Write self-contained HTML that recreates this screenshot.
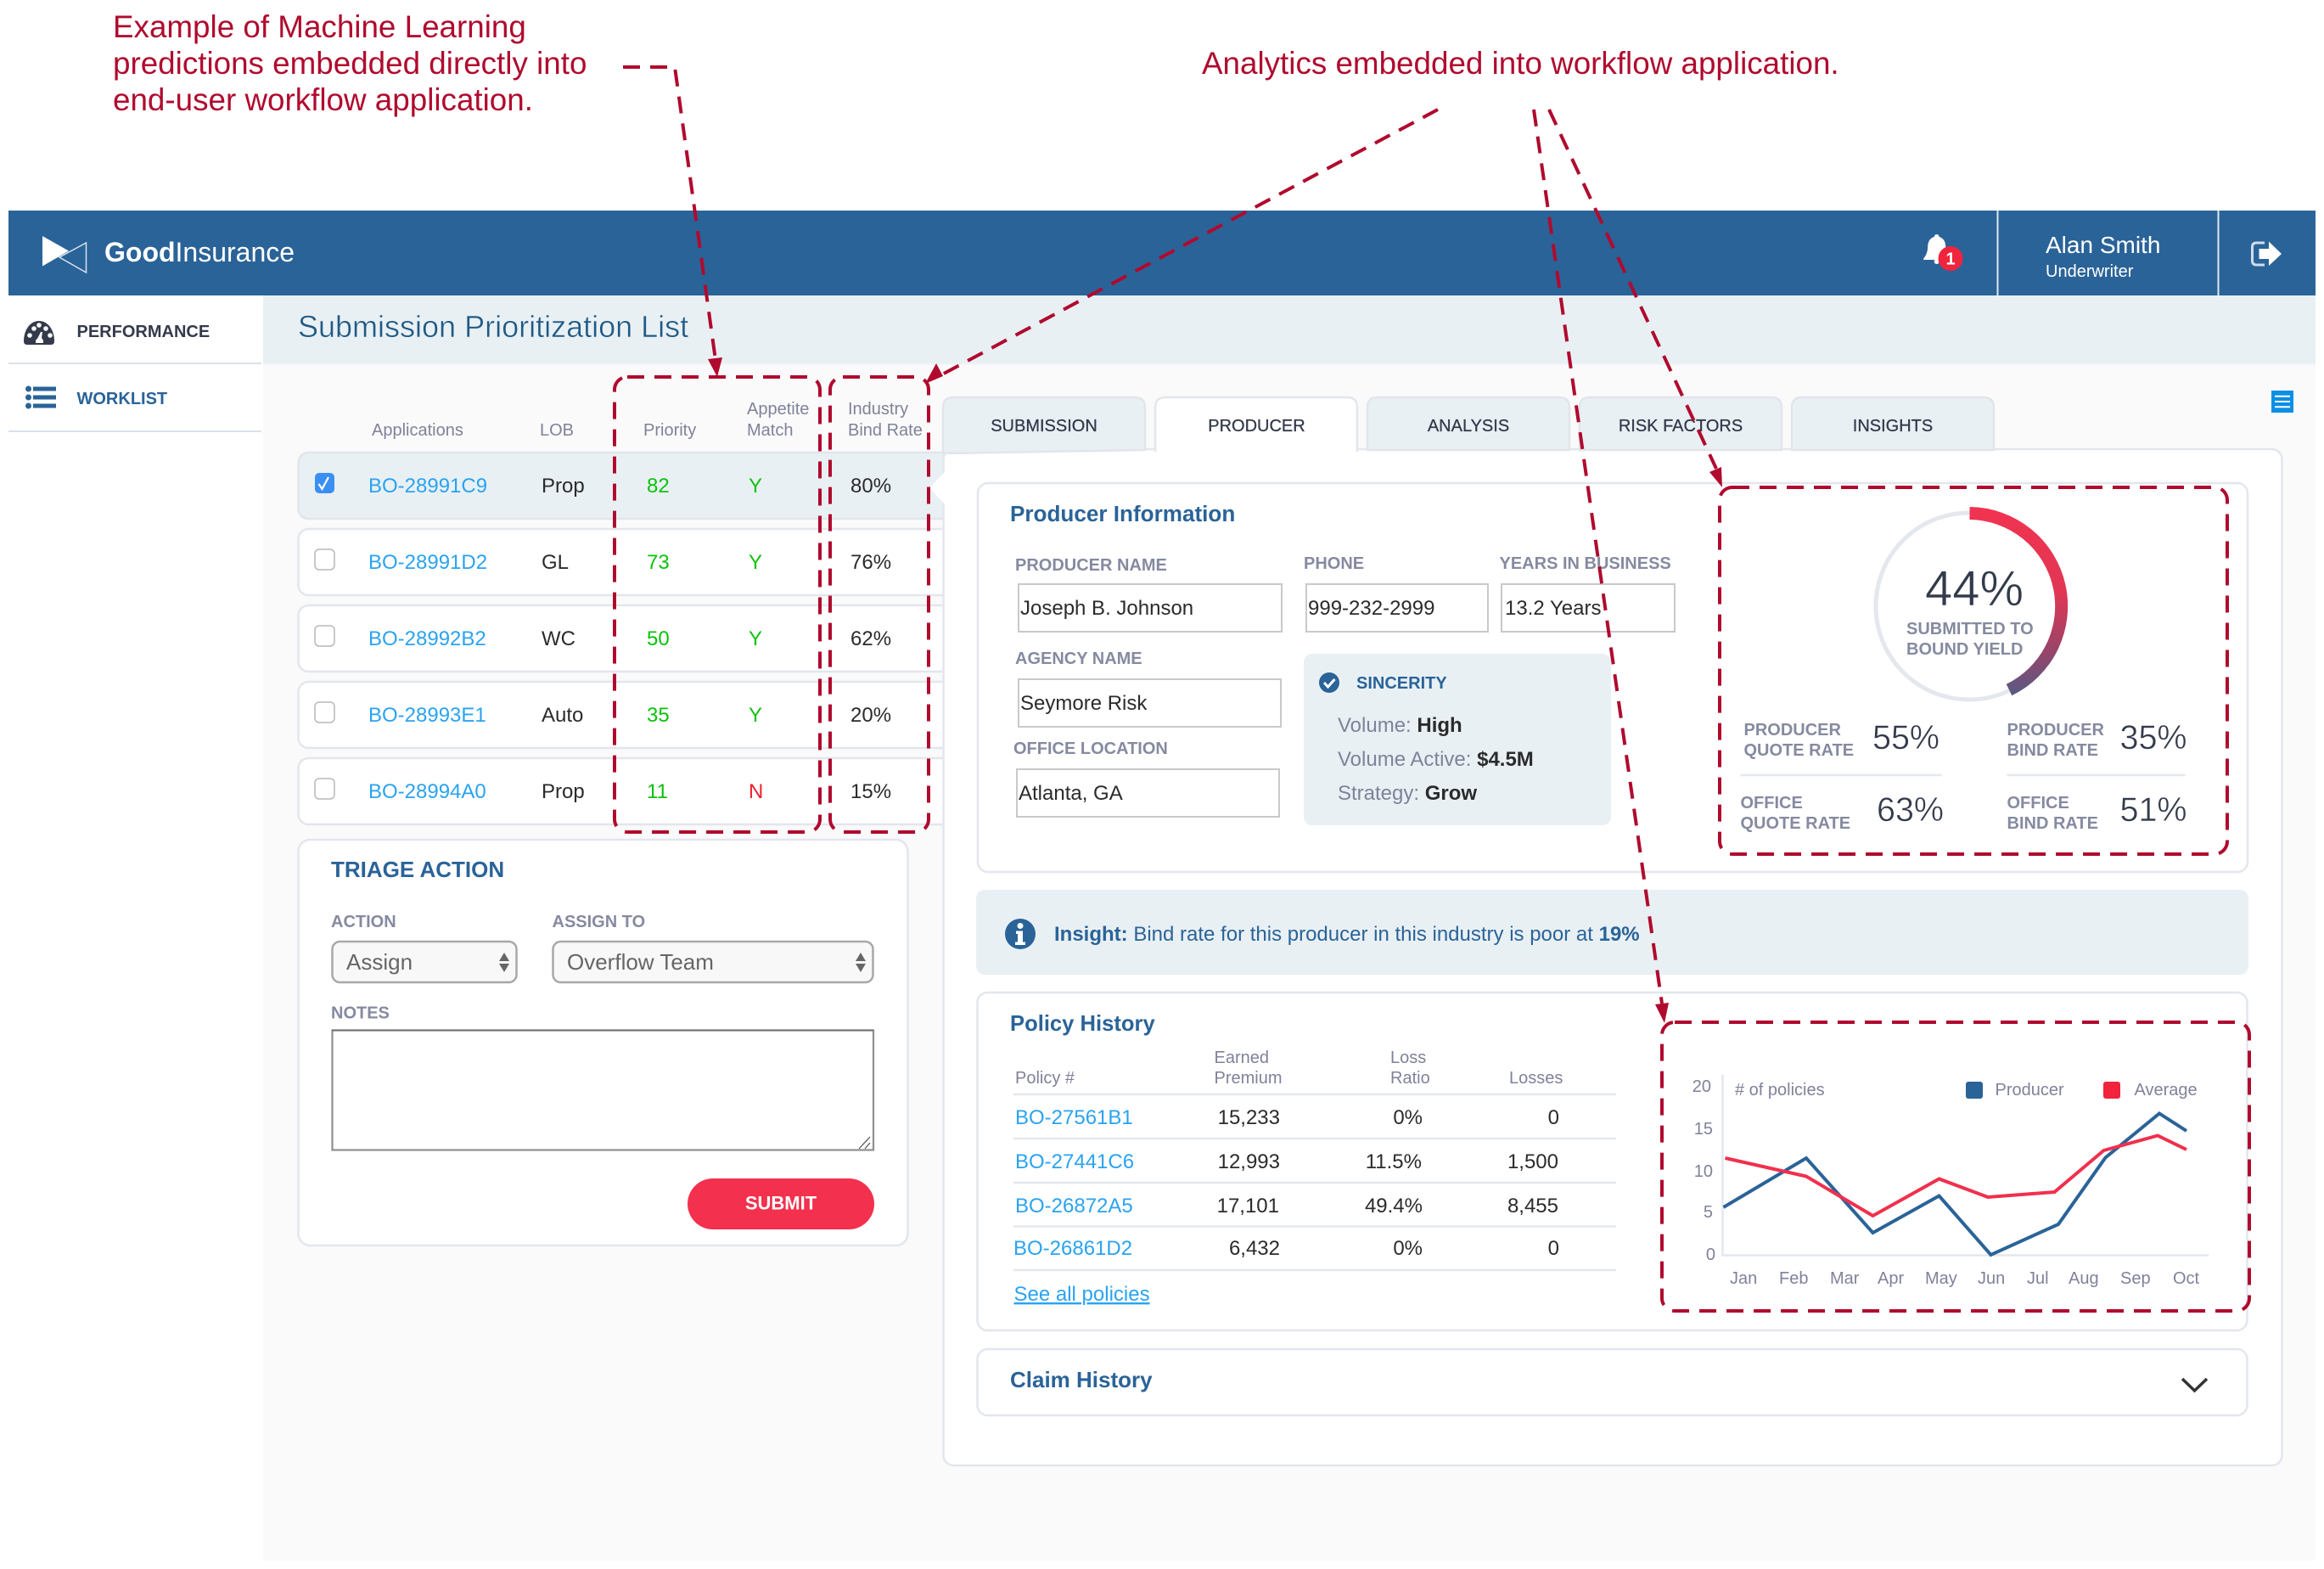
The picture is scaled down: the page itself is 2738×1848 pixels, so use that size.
<!DOCTYPE html>
<html lang="en">
<head>
<meta charset="utf-8">
<title>Submission Prioritization List</title>
<style>
html,body{margin:0;padding:0;background:#fff;width:2738px;height:1848px;overflow:hidden}
svg{display:block}
text{font-family:"Liberation Sans",Arial,sans-serif;white-space:pre}
.ann{font-size:36.8px;fill:#b00a2e}
.h{font-size:20px;fill:#7f8299}
.l{font-size:20px;font-weight:bold;fill:#858aa0}
.b{font-size:24px;fill:#2b2b2b}
.a{font-size:24px;fill:#2aa3f0}
.g{font-size:24px;fill:#0cc20c}
.t{font-size:20px;fill:#333a4b;text-anchor:middle;stroke:#333a4b;stroke-width:.3}
.s{font-weight:bold;fill:#2a6398}
.big{font-size:39.500px;fill:#333a4b;stroke:#fff;stroke-width:.5}
.m{font-size:20px;fill:#7f8299}
.card{fill:#fff;stroke:#e3e6ed;stroke-width:2.500}
.inp{fill:#fff;stroke:#c9c9c9;stroke-width:2}
.dash{fill:none;stroke:#b00a2e;stroke-width:4;stroke-dasharray:20 12}
.arr{fill:#b00a2e}
.sep{stroke:#e4e7ee;stroke-width:2.500}
</style>
</head>
<body>
<svg xmlns="http://www.w3.org/2000/svg" width="2738" height="1848" viewBox="0 0 2738 1848">
<defs>
<linearGradient id="gr" gradientUnits="userSpaceOnUse" x1="0" y1="600" x2="0" y2="820">
<stop offset="0" stop-color="#f03350"/><stop offset=".45" stop-color="#e03755"/><stop offset=".75" stop-color="#9a4468"/><stop offset="1" stop-color="#565a85"/>
</linearGradient>
</defs>

<!-- backgrounds -->
<rect x="310" y="428" width="2418" height="1410" fill="#fafafa"/>
<rect x="310" y="348" width="2418" height="80" fill="#e9f0f4"/>
<rect x="310" y="428" width="2418" height="2" fill="#f2f5f7"/>
<rect x="10" y="248" width="2718" height="100" fill="#2a6398"/>

<!-- header -->
<polygon points="50,278 50,313.500 81,295.500" fill="#fff"/>
<polygon points="70,303 101.500,286 101.500,321" fill="none" stroke="#d6e2ee" stroke-width="1.500"/>
<text x="123" y="308" font-size="32" fill="#fff"><tspan font-weight="bold">Good</tspan>Insurance</text>
<path d="M2281.700 276q-2.500 0-3 3q-7 2-7.500 11q0 9-5 14.500v1.500h31v-1.500q-5-5.500-5-14.500q-.5-9-7.500-11q-.5-3-3-3z" fill="#fff"/>
<circle cx="2281.700" cy="308" r="3" fill="#fff"/>
<circle cx="2298" cy="304.500" r="14.500" fill="#f0243c"/>
<text x="2298" y="311.500" font-size="20" font-weight="bold" fill="#fff" text-anchor="middle">1</text>
<rect x="2352.500" y="248" width="2" height="100" fill="#dfe8f0"/>
<rect x="2612.500" y="248" width="2" height="100" fill="#dfe8f0"/>
<text x="2410" y="298" font-size="28" fill="#fff">Alan Smith</text>
<text x="2410" y="326" font-size="20" fill="#fff">Underwriter</text>
<path d="M2668 286h-9.500q-5 0-5 5v16q0 5 5 5h9.500" fill="none" stroke="#cfdcea" stroke-width="3"/>
<polygon points="2661.500,293 2673,293 2673,284.500 2688,299 2673,313 2673,305 2661.500,305" fill="#fff"/>

<!-- sidebar -->
<path d="M32 406q-4 0-4-4c0-14 8-24 18-24s18 10 18 24q0 4-4 4z" fill="#333a4b"/>
<g fill="#fff"><circle cx="35" cy="395" r="2.800"/><circle cx="40" cy="387" r="2.800"/><circle cx="46" cy="383" r="2.800"/><circle cx="54" cy="387" r="2.800"/><circle cx="59" cy="395" r="2.800"/><polygon points="48,391 50,391 49,398 51,401 51,404 42,404 42,401 44.500,398"/></g>
<text x="90.500" y="397" font-size="20" font-weight="bold" fill="#333a4b">PERFORMANCE</text>
<rect x="10" y="427" width="298" height="2" fill="#d8e2ec"/>
<g fill="#2a6398"><circle cx="33.500" cy="458" r="3.500"/><circle cx="33.500" cy="468" r="3.500"/><circle cx="33.500" cy="478" r="3.500"/><rect x="39" y="455.500" width="27" height="5"/><rect x="39" y="465.500" width="27" height="5"/><rect x="39" y="475.500" width="27" height="5"/></g>
<text x="90.500" y="476" font-size="20" font-weight="bold" fill="#2a6398">WORKLIST</text>
<rect x="10" y="507" width="298" height="2" fill="#d8e2ec"/>

<!-- title -->
<text x="351" y="397" font-size="36" fill="#1f5a85" stroke="#e9f0f4" stroke-width=".5">Submission Prioritization List</text>

<!-- table header -->
<text class="h" x="438" y="513">Applications</text>
<text class="h" x="636" y="513">LOB</text>
<text class="h" x="758" y="513">Priority</text>
<text class="h" x="880" y="488">Appetite</text>
<text class="h" x="880" y="513">Match</text>
<text class="h" x="999" y="488">Industry</text>
<text class="h" x="999" y="513">Bind Rate</text>

<!-- rows -->
<rect x="351.500" y="533" width="800" height="78" rx="12" fill="#e9f0f4" stroke="#e1e5eb" stroke-width="2.500"/>
<rect x="351.500" y="623" width="800" height="78" rx="12" class="card"/>
<rect x="351.500" y="713" width="800" height="78" rx="12" class="card"/>
<rect x="351.500" y="803" width="800" height="78" rx="12" class="card"/>
<rect x="351.500" y="893" width="800" height="78" rx="12" class="card"/>

<rect x="371" y="557" width="23" height="24" rx="5" fill="#3b8ff3"/>
<path d="M375.500 570l4 6 7.500-14" fill="none" stroke="#fff" stroke-width="2.200"/>
<g fill="#fff" stroke="#b9b9b9" stroke-width="1.500">
<rect x="371" y="647" width="23" height="24" rx="5"/>
<rect x="371" y="737" width="23" height="24" rx="5"/>
<rect x="371" y="827" width="23" height="24" rx="5"/>
<rect x="371" y="917" width="23" height="24" rx="5"/>
</g>

<text class="a" x="434" y="580">BO-28991C9</text><text class="b" x="638" y="580">Prop</text><text class="g" x="762" y="580">82</text><text class="g" x="882" y="580">Y</text><text class="b" x="1002" y="580">80%</text>
<text class="a" x="434" y="670">BO-28991D2</text><text class="b" x="638" y="670">GL</text><text class="g" x="762" y="670">73</text><text class="g" x="882" y="670">Y</text><text class="b" x="1002" y="670">76%</text>
<text class="a" x="434" y="760">BO-28992B2</text><text class="b" x="638" y="760">WC</text><text class="g" x="762" y="760">50</text><text class="g" x="882" y="760">Y</text><text class="b" x="1002" y="760">62%</text>
<text class="a" x="434" y="850">BO-28993E1</text><text class="b" x="638" y="850">Auto</text><text class="g" x="762" y="850">35</text><text class="g" x="882" y="850">Y</text><text class="b" x="1002" y="850">20%</text>
<text class="a" x="434" y="940">BO-28994A0</text><text class="b" x="638" y="940">Prop</text><text class="g" x="762" y="940">11</text><text class="b" x="882" y="940" style="fill:#f0202f">N</text><text class="b" x="1002" y="940">15%</text>

<!-- triage card -->
<rect x="351.500" y="989" width="718" height="478" rx="14" class="card"/>
<text x="390" y="1033" font-size="26" class="s">TRIAGE ACTION</text>
<text class="l" x="390" y="1092">ACTION</text>
<text class="l" x="650.500" y="1092">ASSIGN TO</text>
<rect x="391.500" y="1109" width="217" height="48" rx="9" fill="#f8f8f8" stroke="#a8a8a8" stroke-width="2.500"/>
<text x="408" y="1142" font-size="26" fill="#666">Assign</text>
<polygon points="594,1122 600,1132 588,1132" fill="#666"/><polygon points="594,1145 600,1135 588,1135" fill="#666"/>
<rect x="651.500" y="1109" width="377" height="48" rx="9" fill="#f8f8f8" stroke="#a8a8a8" stroke-width="2.500"/>
<text x="668" y="1142" font-size="26" fill="#666">Overflow Team</text>
<polygon points="1014,1122 1020,1132 1008,1132" fill="#666"/><polygon points="1014,1145 1020,1135 1008,1135" fill="#666"/>
<text class="l" x="390" y="1199.500">NOTES</text>
<rect x="391.500" y="1213.500" width="637.500" height="141" fill="#fff" stroke="#8f8f8f" stroke-width="2.200"/>
<path d="M391 1213.500h638" stroke="#707070" stroke-width="2"/>
<path d="M1012 1353l13-14M1019 1353l6-7" stroke="#555" stroke-width="1.200" fill="none"/>
<rect x="810" y="1388" width="220" height="60" rx="30" fill="#f3304d"/>
<text x="920" y="1424.500" font-size="22" font-weight="bold" fill="#fff" text-anchor="middle">SUBMIT</text>

<!-- panel + tabs -->
<rect x="1111.500" y="529" width="1577" height="1197" rx="12" fill="#fff" stroke="#e3e6ed" stroke-width="2.500"/>
<polygon points="1113,556 1095,575 1113,594" fill="#fff"/>
<path d="M1111 534V480q0-12 12-12h214q12 0 12 12v50z" fill="#e9f0f4" stroke="#e1e5eb" stroke-width="2.500"/>
<path d="M1861 530V480q0-12 12-12h214q12 0 12 12v50z" transform="translate(-250 0)" fill="#e9f0f4" stroke="#e1e5eb" stroke-width="2.500"/>
<path d="M1861 530V480q0-12 12-12h214q12 0 12 12v50z" fill="#e9f0f4" stroke="#e1e5eb" stroke-width="2.500"/>
<path d="M2111 530V480q0-12 12-12h214q12 0 12 12v50z" fill="#e9f0f4" stroke="#e1e5eb" stroke-width="2.500"/>
<path d="M1361 531V480q0-12 12-12h214q12 0 12 12v51z" fill="#fff" stroke="#e3e6ed" stroke-width="2.500"/>
<rect x="1362.500" y="526" width="235" height="8" fill="#fff"/>
<text class="t" x="1230" y="508">SUBMISSION</text>
<text class="t" x="1480.500" y="508">PRODUCER</text>
<text class="t" x="1730" y="508">ANALYSIS</text>
<text class="t" x="1980" y="508">RISK FACTORS</text>
<text class="t" x="2230" y="508">INSIGHTS</text>
<rect x="2676" y="460" width="26" height="26" fill="#0a8fe5"/>
<path d="M2680 466.800h18M2680 473h18M2680 479.300h18" stroke="#fff" stroke-width="2"/>

<!-- producer info -->
<rect x="1152" y="569" width="1496" height="458" rx="12" class="card"/>
<text x="1190" y="614" font-size="26.100" class="s">Producer Information</text>
<text class="l" x="1196" y="672">PRODUCER NAME</text>
<text class="l" x="1536" y="670">PHONE</text>
<text class="l" x="1766.500" y="670">YEARS IN BUSINESS</text>
<rect class="inp" x="1200" y="688" width="310" height="56"/><text class="b" x="1202" y="724">Joseph B. Johnson</text>
<rect class="inp" x="1539" y="688" width="214" height="56"/><text class="b" x="1541" y="724">999-232-2999</text>
<rect class="inp" x="1769" y="688" width="204" height="56"/><text class="b" x="1773" y="724">13.2 Years</text>
<text class="l" x="1196" y="782">AGENCY NAME</text>
<rect class="inp" x="1200" y="800" width="309" height="56"/><text class="b" x="1202" y="836">Seymore Risk</text>
<text class="l" x="1194" y="888">OFFICE LOCATION</text>
<rect class="inp" x="1198" y="906" width="309" height="56"/><text class="b" x="1200" y="942">Atlanta, GA</text>
<rect x="1536" y="770" width="362" height="202" rx="10" fill="#e9f0f4"/>
<circle cx="1566" cy="804" r="12" fill="#2a6398"/>
<path d="M1560 804l4.500 5 8-9" fill="none" stroke="#fff" stroke-width="3"/>
<text x="1598" y="811" font-size="20" class="s">SINCERITY</text>
<text x="1576" y="862" font-size="24" fill="#7f8299">Volume: <tspan font-weight="bold" fill="#2b2b2b">High</tspan></text>
<text x="1576" y="902" font-size="24" fill="#7f8299">Volume Active: <tspan font-weight="bold" fill="#2b2b2b">$4.5M</tspan></text>
<text x="1576" y="942" font-size="24" fill="#7f8299">Strategy: <tspan font-weight="bold" fill="#2b2b2b">Grow</tspan></text>

<!-- gauge -->
<circle cx="2320" cy="714" r="110" fill="none" stroke="#e4e7ee" stroke-width="5"/>
<path d="M2320.500 604.500A109.500 109.500 0 0 1 2367 812.500" fill="none" stroke="url(#gr)" stroke-width="15"/>
<text x="2268" y="713" font-size="58" fill="#333a4b" stroke="#fff" stroke-width=".6">44%</text>
<text class="l" x="2246" y="747">SUBMITTED TO</text>
<text class="l" x="2246" y="771">BOUND YIELD</text>
<text class="l" x="2054.500" y="866">PRODUCER</text><text class="l" x="2054.500" y="890">QUOTE RATE</text>
<text class="big" x="2206" y="882">55%</text>
<text class="l" x="2364.500" y="866">PRODUCER</text><text class="l" x="2364.500" y="890">BIND RATE</text>
<text class="big" x="2497.500" y="882">35%</text>
<path class="sep" d="M2050.500 913h237M2364.500 913h210"/>
<text class="l" x="2050.500" y="952">OFFICE</text><text class="l" x="2050.500" y="976">QUOTE RATE</text>
<text class="big" x="2211" y="967">63%</text>
<text class="l" x="2364.500" y="952">OFFICE</text><text class="l" x="2364.500" y="976">BIND RATE</text>
<text class="big" x="2497.500" y="967">51%</text>

<!-- insight -->
<rect x="1150" y="1048" width="1499" height="100" rx="10" fill="#e9f0f4"/>
<circle cx="1202" cy="1100" r="18" fill="#2a6398"/>
<circle cx="1202" cy="1090.500" r="3.500" fill="#fff"/>
<path d="M1197 1096.500h8v13h3v3.500h-12v-3.500h3v-9.500h-2z" fill="#fff"/>
<text x="1242" y="1108" font-size="24" fill="#2a6398"><tspan font-weight="bold">Insight:</tspan> Bind rate for this producer in this industry is poor at <tspan font-weight="bold">19%</tspan></text>

<!-- policy history -->
<rect x="1151.500" y="1169" width="1496" height="398" rx="12" class="card"/>
<text x="1190" y="1214" font-size="25.600" class="s">Policy History</text>
<text class="h" x="1196" y="1276">Policy #</text>
<text class="h" x="1430.500" y="1252">Earned</text><text class="h" x="1430.500" y="1276">Premium</text>
<text class="h" x="1638" y="1252">Loss</text><text class="h" x="1638" y="1276">Ratio</text>
<text class="h" x="1778" y="1276">Losses</text>
<path class="sep" d="M1194 1289h710M1194 1341h710M1194 1393h710M1194 1444.500h710M1194 1496h710"/>
<g text-anchor="end">
<text class="b" x="1508" y="1324">15,233</text><text class="b" x="1676" y="1324">0%</text><text class="b" x="1837" y="1324">0</text>
<text class="b" x="1508" y="1376">12,993</text><text class="b" x="1675" y="1376">11.5%</text><text class="b" x="1836" y="1376">1,500</text>
<text class="b" x="1507" y="1428">17,101</text><text class="b" x="1676" y="1428">49.4%</text><text class="b" x="1836" y="1428">8,455</text>
<text class="b" x="1508" y="1478">6,432</text><text class="b" x="1676" y="1478">0%</text><text class="b" x="1837" y="1478">0</text>
</g>
<text class="a" x="1196" y="1324">BO-27561B1</text>
<text class="a" x="1196" y="1376">BO-27441C6</text>
<text class="a" x="1196" y="1428">BO-26872A5</text>
<text class="a" x="1194" y="1478">BO-26861D2</text>
<text class="a" x="1194.500" y="1532" text-decoration="underline">See all policies</text>

<!-- chart -->
<path d="M2029.500 1266V1478.500H2602" fill="none" stroke="#e4e7ee" stroke-width="2.500"/>
<g class="m">
<text class="m" x="2016" y="1286" text-anchor="end">20</text>
<text class="m" x="2018" y="1336" text-anchor="end">15</text>
<text class="m" x="2018" y="1386" text-anchor="end">10</text>
<text class="m" x="2018" y="1434" text-anchor="end">5</text>
<text class="m" x="2021" y="1484" text-anchor="end">0</text>
<text class="m" x="2044" y="1290"># of policies</text>
<text class="m" x="2350.500" y="1290">Producer</text>
<text class="m" x="2514.500" y="1290">Average</text>
<text class="m" x="2038" y="1512">Jan</text><text class="m" x="2096" y="1512">Feb</text><text class="m" x="2156" y="1512">Mar</text><text class="m" x="2212" y="1512">Apr</text><text class="m" x="2268" y="1512">May</text><text class="m" x="2330" y="1512">Jun</text><text class="m" x="2388" y="1512">Jul</text><text class="m" x="2437" y="1512">Aug</text><text class="m" x="2498" y="1512">Sep</text><text class="m" x="2560" y="1512">Oct</text>
</g>
<rect x="2316" y="1274" width="20" height="20" rx="3" fill="#2a6398"/>
<rect x="2478" y="1274" width="20" height="20" rx="3" fill="#f0243c"/>
<polyline points="2030.500,1422 2128,1364 2206.500,1452 2284.500,1408.500 2345.500,1478 2425,1442 2480.500,1363.500 2544,1311.500 2576,1332" fill="none" stroke="#2a6398" stroke-width="4"/>
<polyline points="2032.500,1364 2128,1385.500 2206.500,1432 2284.500,1388.500 2342,1410 2420.500,1404 2478.500,1355 2542,1337.500 2576,1354" fill="none" stroke="#f0304d" stroke-width="4"/>

<!-- claim history -->
<rect x="1151.500" y="1589" width="1496" height="78" rx="12" class="card"/>
<text x="1190" y="1634" font-size="26" class="s">Claim History</text>
<path d="M2571 1624l14.500 14 14.500-14" fill="none" stroke="#333" stroke-width="3.500"/>

<!-- annotations -->
<text class="ann" x="133" y="44">Example of Machine Learning</text>
<text class="ann" x="133" y="87">predictions embedded directly into</text>
<text class="ann" x="133" y="130">end-user workflow application.</text>
<text class="ann" x="1416" y="87">Analytics embedded into workflow application.</text>

<rect class="dash" x="724" y="444" width="242" height="536" rx="15"/>
<rect class="dash" x="978" y="444" width="116" height="536" rx="15"/>
<rect class="dash" x="2026" y="574" width="598" height="432" rx="15"/>
<rect class="dash" x="1958" y="1204" width="692" height="340" rx="15"/>

<path class="dash" d="M734 79H795L843 424"/>
<polygon class="arr" points="834,423 851,421 845,444"/>
<path class="dash" d="M1694 129L1110 441"/>
<polygon class="arr" points="1103,428 1111,443 1090,452"/>
<path class="dash" d="M1807 129L1958 1182"/>
<polygon class="arr" points="1950,1183 1966,1181 1961,1205"/>
<path class="dash" d="M1825 129L2022 552"/>
<polygon class="arr" points="2014,556 2028,550 2029,574"/>
</svg>
</body>
</html>
